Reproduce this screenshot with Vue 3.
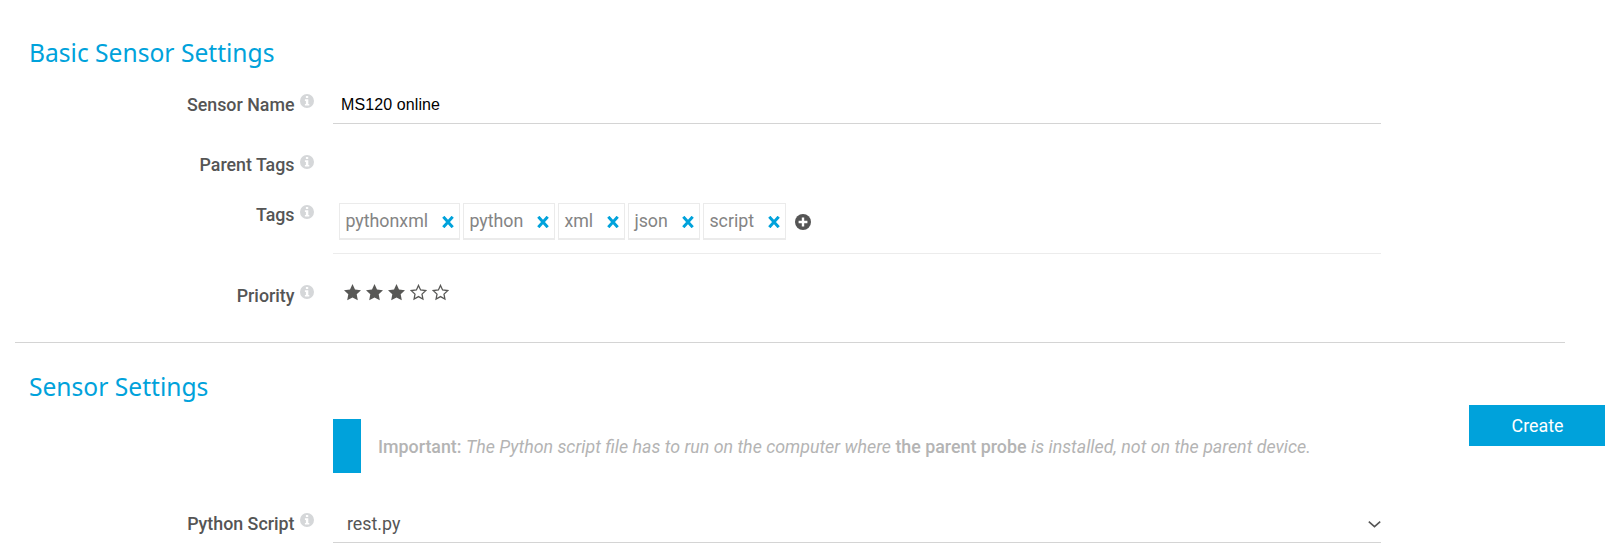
<script setup>
import { ref } from 'vue'

const sensorName = ref('MS120 online')
const tags = ref(['pythonxml', 'python', 'xml', 'json', 'script'])
const widths = { pythonxml: 121, python: 92, xml: 67, json: 72, script: 83 }
const priority = ref(3)
const STAR = 'M8.5 0 L11 5.4 L17 6.2 L12.7 10.3 L13.8 16.2 L8.5 13.4 L3.2 16.2 L4.3 10.3 L0 6.2 L6 5.4 Z'
const STAR_OUTLINE = 'M8.5 1.4 L10.6 6 L15.6 6.6 L12 10.1 L12.9 15 L8.5 12.6 L4.1 15 L5 10.1 L1.4 6.6 L6.4 6 Z'
const INFO = 'M7 0a7 7 0 1 0 0 14a7 7 0 1 0 0-14z M5.9 2h2.3v2.1H5.9z M4.9 5.2h3.4v4.7h1v1.7H4.9V9.9h1V6.9h-1z'
const removeTag = (t) => { tags.value = tags.value.filter((x) => x !== t) }
</script>

<template>
  <main class="page">
    <section class="basic">
      <h2>Basic Sensor Settings</h2>
      <div class="row name-row">
        <label class="label">Sensor Name
          <svg class="info" viewBox="0 0 14 14"><path :d="INFO" /></svg>
        </label>
        <div class="field line"><input v-model="sensorName" class="name-input" type="text"></div>
      </div>
      <div class="row parent-row">
        <label class="label low">Parent Tags
          <svg class="info" viewBox="0 0 14 14"><path :d="INFO" /></svg>
        </label>
      </div>
      <div class="row tags-row">
        <label class="label low">Tags
          <svg class="info" viewBox="0 0 14 14"><path :d="INFO" /></svg>
        </label>
        <div class="field tags">
          <span v-for="t in tags" :key="t" class="tag" :style="{ width: widths[t] + 'px' }">
            <span>{{ t }}</span>
            <svg class="remove" viewBox="0 0 12 12" @click="removeTag(t)"><path d="M1.3 0.8L10.7 11.2M10.7 0.8L1.3 11.2" /></svg>
          </span>
          <svg class="add" viewBox="0 0 16 16">
            <circle cx="8" cy="8" r="8" />
            <path d="M8 3.6v8.8M3.6 8h8.8" />
          </svg>
        </div>
      </div>
      <div class="row priority-row">
        <label class="label">Priority
          <svg class="info" viewBox="0 0 14 14"><path :d="INFO" /></svg>
        </label>
        <div class="stars">
          <svg v-for="n in 5" :key="n" viewBox="0 0 17 17" @click="priority = n">
            <path v-if="n <= priority" class="on" :d="STAR" />
            <path v-else class="off" :d="STAR_OUTLINE" />
          </svg>
        </div>
      </div>
    </section>
    <section class="specific">
      <h2>Sensor Settings</h2>
      <div class="notice">
        <p><b>Important:</b> <i>The Python script file has to run on the computer where</i> <b>the parent probe</b> <i>is installed, not on the parent device.</i></p>
      </div>
      <div class="row script-row">
        <label class="label">Python Script
          <svg class="info" viewBox="0 0 14 14"><path :d="INFO" /></svg>
        </label>
        <div class="field line select">
          <span>rest.py</span>
          <svg class="chevron" viewBox="0 0 13 7"><path d="M0.8 0.7L6.5 5.7L12.2 0.7" /></svg>
        </div>
      </div>
    </section>
    <button class="create">Create</button>
  </main>
</template>

<style>
body { background: #fff; }
</style>

<style scoped>
.page {
  position: relative;
  width: 1605px;
  height: 554px;
  overflow: hidden;
  box-sizing: border-box;
  padding-left: 15px;
  font: 17.82px/20px Roboto, sans-serif;
  color: #555;
}
.basic {
  width: 1550px;
  height: 343px;
  box-sizing: border-box;
  border-bottom: 1px solid #d4d4d4;
  padding-top: 35px;
}
h2 {
  margin: 0;
  padding-left: 14px;
  height: 36px;
  font: 400 24.6px/36px "Noto Sans", sans-serif;
  color: #00a2db;
}
.row {
  display: grid;
  grid-template-columns: 300px 1048px;
  column-gap: 18px;
}
.label {
  display: flex;
  justify-content: flex-end;
  align-items: flex-start;
  gap: 5.5px;
  padding-top: 10px;
  padding-right: 1px;
  font-weight: 500;
  white-space: nowrap;
}
.info { width: 14px; height: 14px; margin-top: -1px; fill: #d5d7d9; fill-rule: evenodd; }
.low .info { margin-top: 0; }
.line { border-bottom: 1px solid #d4d4d4; }
.name-row { height: 39px; margin-top: 14px; }
.name-input {
  display: block;
  width: 100%;
  height: 38px;
  box-sizing: border-box;
  border: 0;
  padding: 1px 8px 0;
  outline: none;
  background: none;
  font: 16px "Liberation Sans", Arial, sans-serif;
  letter-spacing: 0.1px;
  color: #000;
}
.parent-row { height: 40px; margin-top: 21px; }
.tags-row { height: 59px; margin-top: 10px; }
.tags {
  display: flex;
  align-items: flex-start;
  gap: 3px;
  box-sizing: border-box;
  padding: 8px 0 0 6px;
  border-bottom: 1px solid #ececec;
}
.tag {
  display: flex;
  justify-content: space-between;
  box-sizing: border-box;
  height: 37px;
  padding: 7px 5px 0 5.4px;
  border: 1px solid #ebebeb;
  border-bottom-width: 2px;
  color: #848484;
}
.remove { width: 12px; height: 12px; margin-top: 5px; fill: none; stroke: #00a2db; stroke-width: 3; }
.add { width: 16px; height: 16px; margin: 11px 0 0 6px; fill: #555; }
.add path { stroke: #fff; stroke-width: 2.4; }
.priority-row { height: 40px; margin-top: 22px; }
.stars { display: flex; gap: 5px; padding: 8px 0 0 11px; }
.stars svg { width: 17px; height: 17px; }
.on { fill: #585856; }
.off { fill: none; stroke: #585856; stroke-width: 1.3; }
.specific { padding-top: 26px; }
.notice {
  display: flex;
  align-items: center;
  height: 54px;
  margin: 14px 0 0 318px;
  border-left: 28px solid #00a2db;
  padding-left: 17px;
  color: #b4b4b4;
}
.notice p { margin: 0; padding-top: 2px; white-space: nowrap; }
.notice b { font-weight: 500; }
.script-row { height: 39px; margin-top: 31px; }
.select {
  display: flex;
  justify-content: space-between;
  padding: 10px 0.5px 0 14px;
}
.chevron { width: 13px; height: 7px; margin: 6.5px 0 0; fill: none; stroke: #555; stroke-width: 1.6; }
.create {
  position: absolute;
  left: 1469px;
  top: 405px;
  width: 136px;
  height: 41px;
  border: 0;
  padding: 0 0 0 1px;
  background: #00a2db;
  color: #fff;
  font: 17.82px Roboto, sans-serif;
}
</style>
